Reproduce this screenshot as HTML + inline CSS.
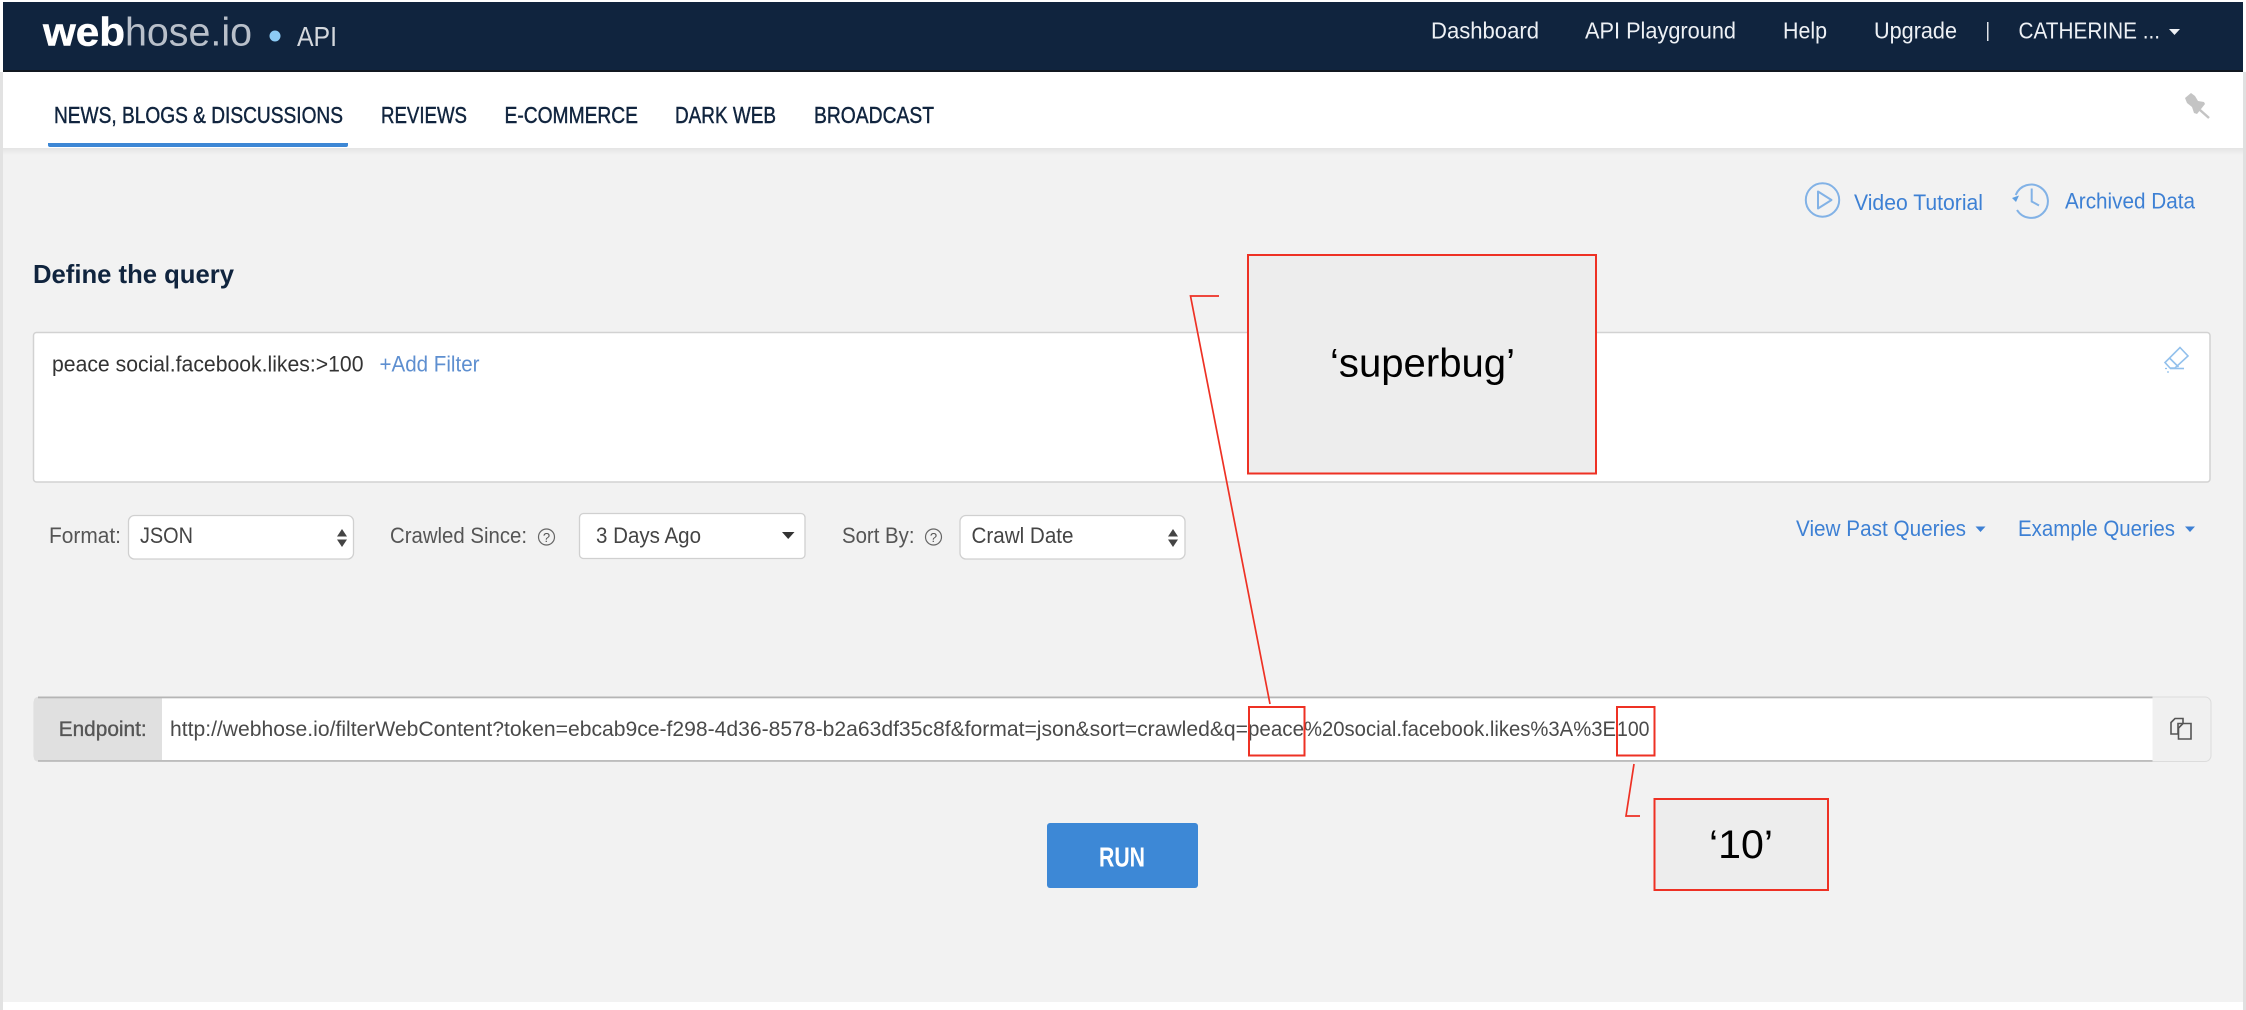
<!DOCTYPE html>
<html lang="en">
<head>
<meta charset="utf-8">
<title>webhose.io API</title>
<style>
html,body{margin:0;padding:0;background:#fff;width:2246px;height:1010px;overflow:hidden}
svg{display:block}
text{font-family:"Liberation Sans",sans-serif}
.nav{font-size:23.5px;fill:#10243e;stroke:#10243e;stroke-width:.45}
.top{font-size:23.5px;fill:#eef1f5}
.lbl{font-size:22px;fill:#555}
.val{font-size:22px;fill:#444}
.lnk{font-size:22px;fill:#3d80d4}
.url{font-size:21px;fill:#4a4a4a}
.ann{font-size:40px;fill:#000}
</style>
</head>
<body>
<svg width="2246" height="1010" viewBox="0 0 2246 1010" xmlns="http://www.w3.org/2000/svg">
<defs>
<linearGradient id="sh" x1="0" y1="0" x2="0" y2="1"><stop offset="0" stop-color="#e4e4e4"/><stop offset="1" stop-color="#f2f2f2"/></linearGradient>
</defs>
<rect width="2246" height="1010" fill="#fff"/>
<!-- side gutters -->
<rect x="0" y="72" width="3" height="938" fill="#e2e2e2"/>
<rect x="2243" y="72" width="3" height="938" fill="#e0e0e0"/>
<!-- content bg -->
<rect x="3" y="148" width="2240" height="854" fill="#f2f2f2"/>
<rect x="3" y="148" width="2240" height="7" fill="url(#sh)"/>
<!-- header -->
<rect x="3" y="2" width="2240" height="68" fill="#10243e"/>
<rect x="3" y="70" width="2240" height="2" fill="#111820"/>
<text x="43" y="45.5" font-size="40" font-weight="700" fill="#fff" stroke="#fff" stroke-width=".5" textLength="82" lengthAdjust="spacingAndGlyphs">web</text>
<text x="125" y="45.5" font-size="40" fill="#b9c0ca" textLength="127" lengthAdjust="spacingAndGlyphs">hose.io</text>
<circle cx="275" cy="36" r="5.5" fill="#8ccbf5"/>
<text x="297" y="46" font-size="28" fill="#d4d8dd" textLength="40" lengthAdjust="spacingAndGlyphs">API</text>
<text class="top" x="1431" y="38.5" textLength="108" lengthAdjust="spacingAndGlyphs">Dashboard</text>
<text class="top" x="1585" y="38.5" textLength="151" lengthAdjust="spacingAndGlyphs">API Playground</text>
<text class="top" x="1783" y="38.5" textLength="44" lengthAdjust="spacingAndGlyphs">Help</text>
<text class="top" x="1874" y="38.5" textLength="83" lengthAdjust="spacingAndGlyphs">Upgrade</text>
<rect x="1987" y="22" width="1.5" height="19" fill="#dfe3e8"/>
<text class="top" x="2018.5" y="38.5" textLength="141.5" lengthAdjust="spacingAndGlyphs">CATHERINE ...</text>
<path d="M2169 29H2180L2174.5 35Z" fill="#eef1f5"/>
<!-- tabs -->
<text class="nav" x="54" y="123" textLength="289" lengthAdjust="spacingAndGlyphs">NEWS, BLOGS &amp; DISCUSSIONS</text>
<text class="nav" x="381" y="123" textLength="86" lengthAdjust="spacingAndGlyphs">REVIEWS</text>
<text class="nav" x="504.5" y="123" textLength="133.5" lengthAdjust="spacingAndGlyphs">E-COMMERCE</text>
<text class="nav" x="675" y="123" textLength="101" lengthAdjust="spacingAndGlyphs">DARK WEB</text>
<text class="nav" x="814" y="123" textLength="120" lengthAdjust="spacingAndGlyphs">BROADCAST</text>
<path d="M48 143H348V145Q348 147 346 147H50Q48 147 48 145Z" fill="#3d87d5"/>
<!-- pin -->
<path d="M2185 98L2191 93L2195 96L2198 101L2204 102L2205 104L2197 114L2194 113L2192 107L2187 103Z" fill="#c4c4c4"/>
<path d="M2200 110L2209 118" stroke="#c4c4c4" stroke-width="2.5" fill="none"/>
<!-- video tutorial / archived -->
<circle cx="1822.5" cy="200" r="16.7" fill="none" stroke="#82b2e6" stroke-width="2"/>
<path d="M1818 191.5L1831.5 200L1818 208.5Z" fill="none" stroke="#82b2e6" stroke-width="2" stroke-linejoin="round"/>
<text class="lnk" x="1854" y="210" textLength="129" lengthAdjust="spacingAndGlyphs">Video Tutorial</text>
<path d="M2015.7 195A16.7 16.7 0 1 1 2017 210" fill="none" stroke="#82b2e6" stroke-width="2"/>
<path d="M2012 198L2019 195.5L2016 202Z" fill="#5f9fe0"/>
<path d="M2031.7 188.5V201.5L2039 205.5" fill="none" stroke="#82b2e6" stroke-width="2"/>
<text class="lnk" x="2065" y="208.5" textLength="130" lengthAdjust="spacingAndGlyphs">Archived Data</text>
<!-- heading -->
<text x="33" y="283" font-size="26" font-weight="700" fill="#10243e" textLength="201" lengthAdjust="spacingAndGlyphs">Define the query</text>
<!-- query box -->
<rect x="33.5" y="332.5" width="2176.5" height="149.5" rx="3" fill="#fff" stroke="#d2d2d2" stroke-width="1.5"/>
<text x="52" y="371.5" font-size="22" fill="#333" textLength="311.5" lengthAdjust="spacingAndGlyphs">peace social.facebook.likes:&gt;100</text>
<text x="379.5" y="371.5" font-size="22" fill="#5e8fd0" textLength="100" lengthAdjust="spacingAndGlyphs">+Add Filter</text>
<!-- eraser -->
<g fill="none" stroke="#92c0ec" stroke-width="1.6">
<path d="M2180 347.5L2188 356L2175 368H2170L2165 362.5Z"/>
<path d="M2169.5 358L2178.5 367"/>
<path d="M2170 368.5H2184"/>
<path d="M2165 368.5H2167M2167 372H2169" stroke-width="1.3"/>
</g>
<!-- format row -->
<text class="lbl" x="49" y="543" textLength="72" lengthAdjust="spacingAndGlyphs">Format:</text>
<rect x="128.5" y="515.5" width="225" height="43.5" rx="6" fill="#fff" stroke="#d0d0d0" stroke-width="1.3"/>
<text class="val" x="140" y="543" textLength="53" lengthAdjust="spacingAndGlyphs">JSON</text>
<path d="M342 529L347 536.5H337ZM342 547L337 539.5H347Z" fill="#444"/>
<text class="lbl" x="390" y="543" textLength="137" lengthAdjust="spacingAndGlyphs">Crawled Since:</text>
<circle cx="546.5" cy="537" r="8" fill="none" stroke="#666" stroke-width="1.2"/>
<text x="546.5" y="542" font-size="13" fill="#555" text-anchor="middle">?</text>
<rect x="579.5" y="513.5" width="225.5" height="45" rx="4" fill="#fff" stroke="#d0d0d0" stroke-width="1.3"/>
<text class="val" x="596" y="543" textLength="105" lengthAdjust="spacingAndGlyphs">3 Days Ago</text>
<path d="M782 532H794.5L788.2 539Z" fill="#333"/>
<text class="lbl" x="842" y="543" textLength="72.5" lengthAdjust="spacingAndGlyphs">Sort By:</text>
<circle cx="933.5" cy="537" r="8" fill="none" stroke="#666" stroke-width="1.2"/>
<text x="933.5" y="542" font-size="13" fill="#555" text-anchor="middle">?</text>
<rect x="960" y="515.5" width="225" height="43.5" rx="6" fill="#fff" stroke="#d0d0d0" stroke-width="1.3"/>
<text class="val" x="971.5" y="543" textLength="102" lengthAdjust="spacingAndGlyphs">Crawl Date</text>
<path d="M1173 529L1178 536.5H1168ZM1173 547L1168 539.5H1178Z" fill="#444"/>
<text class="lnk" x="1796" y="536" textLength="170" lengthAdjust="spacingAndGlyphs">View Past Queries</text>
<path d="M1975.5 526.5H1985.5L1980.5 532Z" fill="#3d80d4"/>
<text class="lnk" x="2018" y="536" textLength="157" lengthAdjust="spacingAndGlyphs">Example Queries</text>
<path d="M2185 526.5H2195L2190 532Z" fill="#3d80d4"/>
<!-- endpoint -->
<rect x="34" y="697" width="2177" height="64.5" rx="6" fill="#f0f0f0" stroke="#dcdcdc" stroke-width="1"/>
<path d="M38 697H162V761.5H38Q34 761.5 34 757.5V701Q34 697 38 697Z" fill="#e0e0e0"/>
<rect x="162" y="697" width="1990.5" height="64.5" fill="#fff"/>
<rect x="38" y="696.5" width="2114.5" height="1.8" fill="#b5b5b5"/>
<rect x="38" y="760" width="2114.5" height="1.8" fill="#bdbdbd"/>
<text x="58.7" y="736" font-size="21" fill="#555" stroke="#555" stroke-width=".35" textLength="88" lengthAdjust="spacingAndGlyphs">Endpoint:</text>
<text class="url" x="170" y="736" textLength="1078" lengthAdjust="spacingAndGlyphs">http://webhose.io/filterWebContent?token=ebcab9ce-f298-4d36-8578-b2a63df35c8f&amp;format=json&amp;sort=crawled&amp;q=</text>
<text class="url" x="1248" y="736" textLength="56" lengthAdjust="spacingAndGlyphs">peace</text>
<text class="url" x="1304" y="736" textLength="312" lengthAdjust="spacingAndGlyphs">%20social.facebook.likes%3A%3E</text>
<text class="url" x="1617" y="736" textLength="32.5" lengthAdjust="spacingAndGlyphs">100</text>
<!-- copy icon -->
<g fill="none" stroke="#555" stroke-width="1.6">
<path d="M2175 718.5H2183V723.5H2178V734H2171V722.5Z"/>
<path d="M2183 723.5H2191V739H2178.5V728Z" fill="#f0f0f0"/>
</g>
<!-- run -->
<rect x="1047" y="823" width="151" height="65" rx="3" fill="#3d88d6"/>
<text x="1099" y="866.5" font-size="28" font-weight="700" fill="#fff" textLength="46" lengthAdjust="spacingAndGlyphs">RUN</text>
<!-- annotations -->
<rect x="1248" y="255" width="348" height="218.5" fill="#ededed" stroke="#ee3124" stroke-width="2"/>
<text class="ann" x="1330" y="376.5" textLength="185" lengthAdjust="spacingAndGlyphs">‘superbug’</text>
<path d="M1219 296H1190.5L1270 704" fill="none" stroke="#ee3124" stroke-width="1.7"/>
<rect x="1249" y="707" width="55.5" height="48.5" fill="none" stroke="#ee3124" stroke-width="2"/>
<rect x="1617" y="707" width="37.5" height="48.5" fill="none" stroke="#ee3124" stroke-width="2"/>
<path d="M1634 764L1626 816H1640" fill="none" stroke="#ee3124" stroke-width="1.7"/>
<rect x="1654.5" y="799" width="173.5" height="91" fill="#ededed" stroke="#ee3124" stroke-width="2"/>
<text class="ann" x="1709" y="858" textLength="64" lengthAdjust="spacingAndGlyphs">‘10’</text>
</svg>
</body>
</html>
